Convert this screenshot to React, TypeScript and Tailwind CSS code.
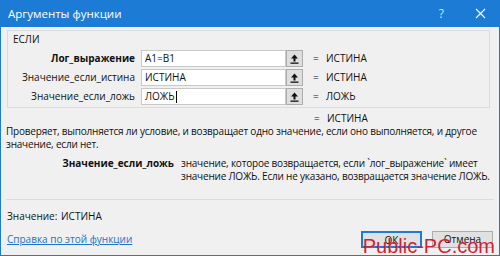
import React from "react";

const font = { fontFamily: '"Open Sans", "Noto Sans", sans-serif' };

const args = [
  { label: "Лог_выражение", value: "A1=B1", result: "ИСТИНА", bold: true },
  { label: "Значение_если_истина", value: "ИСТИНА", result: "ИСТИНА", bold: false },
  { label: "Значение_если_ложь", value: "ЛОЖЬ", result: "ЛОЖЬ", bold: false },
];

function RefIcon() {
  return (
    <svg width="9" height="10" viewBox="0 0 9 10">
      <path d="M4.5 0.5 L8 4.5 L5.5 4.5 L5.5 7.5 L3.5 7.5 L3.5 4.5 L1 4.5 Z" fill="#111" />
      <rect x="0.5" y="8.5" width="8" height="1.3" fill="#111" />
    </svg>
  );
}

export default function App() {
  return (
    <div
      style={font}
      className="relative h-[256px] w-[500px] overflow-hidden border-x border-b border-[#1c7cd5] bg-[#f0f0f0] text-[10px] text-[#111]"
    >
      {/* title bar */}
      <div className="flex h-[27px] items-center bg-[#1c7cd5] pl-[7px] text-[11.5px] text-white">
        <span>Аргументы функции</span>
        <span className="ml-auto mr-[31px] text-[12px] text-[#cfe3f7]">?</span>
        <svg width="11" height="11" viewBox="0 0 11 11" className="mr-[13px]">
          <path d="M1 1 L10 10 M10 1 L1 10" stroke="#fff" strokeWidth="1.1" />
        </svg>
      </div>

      <div className="whitespace-nowrap px-[5px]">
        {/* group box */}
        <div className="mt-[3px] ml-[1px] mr-[4px] h-[78px] border border-[#dcdcdc] pl-[5px]">
          <div className="mt-[1px] leading-[14px]">ЕСЛИ</div>
          <div className="mt-[4px] flex flex-col gap-[2px]">
            {args.map((a) => (
              <div key={a.label} className="flex h-[17px] items-center">
                <div className={`w-[128px] pr-[6px] text-right ${a.bold ? "font-bold" : ""}`}>{a.label}</div>
                <div className="flex h-[17px] w-[145px] items-center border border-[#c8c8c8] bg-white pl-[3px]">
                  {a.value}
                  {a.label === "Значение_если_ложь" && <span className="ml-[1px] h-[12px] w-px bg-black" />}
                </div>
                <div className="flex h-[17px] w-[17px] items-center justify-center border border-[#adadad] bg-[#dedede]">
                  <RefIcon />
                </div>
                <span className="ml-[10px] w-[13px]">=</span>
                <span>{a.result}</span>
              </div>
            ))}
          </div>
        </div>

        <div className="mt-[3px] flex h-[14px] items-center pl-[308px]">
          <span className="w-[13px]">=</span>
          <span>ИСТИНА</span>
        </div>

        <p className="leading-[13px] tracking-[-0.2px]">
          Проверяет, выполняется ли условие, и возвращает одно значение, если оно выполняется, и другое
          <br />
          значение, если нет.
        </p>

        <div className="mt-[6px] flex leading-[13px]">
          <div className="w-[175px] pr-[7px] text-right font-bold">Значение_если_ложь</div>
          <div className="tracking-[-0.2px]">
            значение, которое возвращается, если `лог_выражение` имеет
            <br />
            значение ЛОЖЬ. Если не указано, возвращается значение ЛОЖЬ.
          </div>
        </div>

        <div className="mt-[16px] h-px bg-[#dcdcdc]" />

        <div className="mt-[9px] flex leading-[14px]">
          <span className="w-[55px] pl-[1px]">Значение:</span>
          <span>ИСТИНА</span>
        </div>

        <div className="mt-[8px] flex items-center">
          <span className="pl-[1px] text-[#1a73c8] underline">Справка по этой функции</span>
          <button className="ml-auto h-[17px] w-[61px] border-2 border-[#1c7cd5] bg-[#e1e1e1] text-[10px]">ОК</button>
          <button className="ml-[10px] mr-[1px] h-[17px] w-[61px] border border-[#adadad] bg-[#e1e1e1] text-[10px]">Отмена</button>
        </div>
      </div>

      {/* watermark */}
      <div
        className="pointer-events-none absolute bottom-[-3px] right-[4px] text-[20px] leading-[24px] text-[#d11f36]"
        style={{ fontFamily: '"Liberation Sans", Arial, sans-serif' }}
      >
        Public-PC.com
      </div>
    </div>
  );
}
